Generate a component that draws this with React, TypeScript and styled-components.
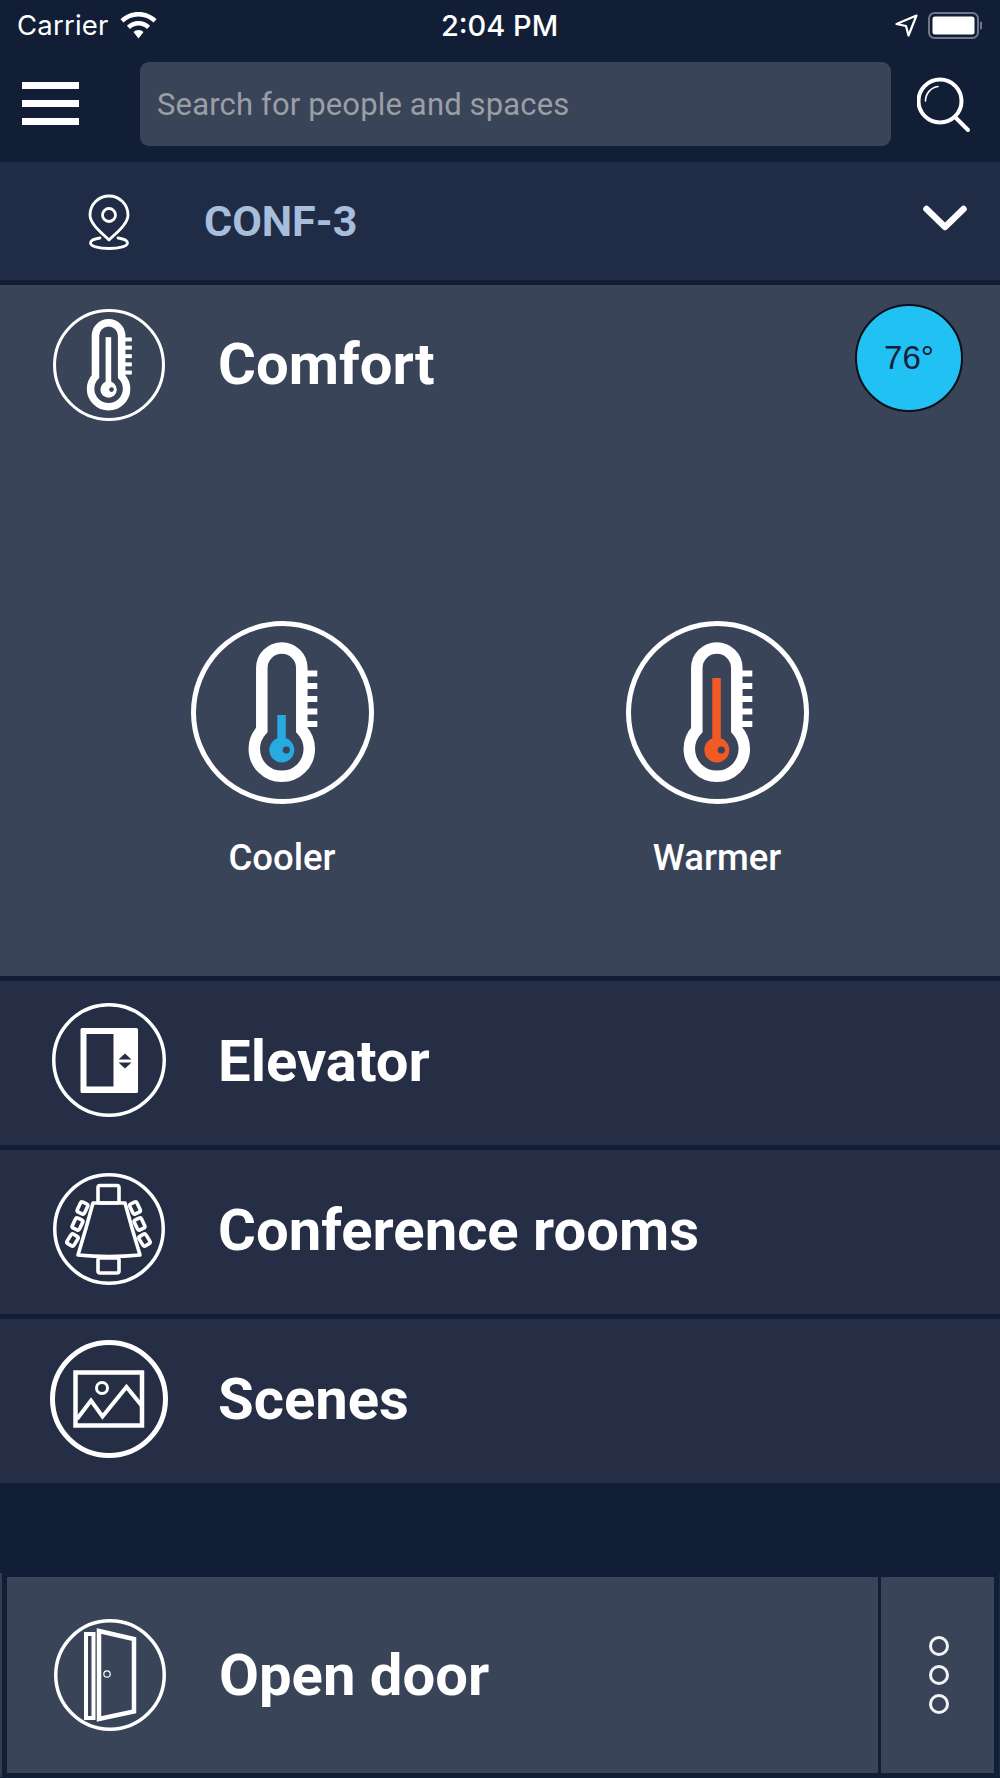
import React from "react";
import styled, { createGlobalStyle } from "styled-components";

const Global = createGlobalStyle`
  html, body { margin: 0; padding: 0; background: #121e35; }
  * { box-sizing: border-box; }
`;

const Page = styled.div`
  width: 1000px;
  height: 1778px;
  background: #121e35;
  color: #fff;
  font-family: Roboto, "Liberation Sans", sans-serif;
  overflow: hidden;
  display: flex;
  flex-direction: column;
`;

const StatusBar = styled.div`
  height: 52px;
  display: grid;
  grid-template-columns: 1fr auto 1fr;
  align-items: center;
  padding: 0 18px 2px 17px;
  font-family: Inter, Roboto, sans-serif;
`;
const StatusLeft = styled.div`
  display: flex;
  align-items: center;
  gap: 11px;
  font-size: 27.5px;
  letter-spacing: 0.2px;
`;
const StatusTime = styled.div`
  font-size: 29px;
  font-weight: 500;
`;
const StatusRight = styled.div`
  display: flex;
  justify-content: flex-end;
  align-items: center;
  gap: 10px;
`;

const TopBar = styled.div`
  height: 110px;
  display: flex;
  align-items: flex-start;
  padding: 10px 0 0 22px;
`;
const Burger = styled.div`
  width: 57px;
  height: 43px;
  margin-top: 20px;
  display: flex;
  flex-direction: column;
  justify-content: space-between;
`;
const BurgerBar = styled.span`
  height: 7px;
  background: #fff;
`;
const SearchField = styled.div`
  width: 751px;
  height: 84px;
  margin-left: 61px;
  padding-left: 17px;
  display: flex;
  align-items: center;
  background: #3a4459;
  border-radius: 9px;
  color: #9b9ea5;
  font-size: 31px;
  letter-spacing: 0.15px;
`;
const SearchBtn = styled.div`
  margin: 15px 0 0 26px;
  line-height: 0;
`;

const LocationRow = styled.div`
  height: 118px;
  background: #202c46;
  display: flex;
  align-items: center;
  padding: 0 33px 0 88px;
  line-height: 0;
`;
const LocationName = styled.div`
  margin: 0 0 0 74px;
  flex: 1;
  color: #a6bedb;
  font-size: 43px;
  font-weight: 700;
  line-height: 1;
`;
const ChevronWrap = styled.div`
  margin-bottom: 4px;
`;

const Panel = styled.section`
  margin-top: 5px;
  height: 691px;
  background: #3a4459;
`;
const PanelHeader = styled.div`
  display: grid;
  grid-template-columns: 218px 1fr auto;
  align-items: center;
  height: 160px;
  padding-right: 37px;
`;
const IconSlot = styled.div<{ $lift?: number }>`
  display: flex;
  justify-content: center;
  align-items: center;
  line-height: 0;
  margin-bottom: ${(p) => p.$lift ?? 0}px;
`;
const Title = styled.div`
  font-size: 58px;
  font-weight: 700;
  line-height: 1;
  margin-bottom: 3px;
`;
const RowTitle = styled(Title)`
  margin-bottom: 5px;
`;
const DoorTitle = styled(Title)`
  margin: 0 0 0 6px;
`;
const Badge = styled.div`
  width: 108px;
  height: 108px;
  margin-top: -14px;
  border-radius: 50%;
  background: #21c2f3;
  border: 2.5px solid #0b0f18;
  color: #14213a;
  font-family: "Liberation Sans", Arial, sans-serif;
  font-size: 33px;
  display: flex;
  align-items: center;
  justify-content: center;
`;
const Actions = styled.div`
  display: grid;
  grid-template-columns: 434px 434px;
  column-gap: 1px;
  padding: 176px 0 0 65px;
`;
const Action = styled.div`
  display: flex;
  flex-direction: column;
  align-items: center;
`;
const ActionLabel = styled.div`
  margin-top: 34px;
  font-size: 36.5px;
  font-weight: 500;
  line-height: 40px;
`;

const Rows = styled.div`
  margin-top: 5px;
  display: flex;
  flex-direction: column;
  gap: 5px;
`;
const Row = styled.div`
  height: 164px;
  background: #252e44;
  display: grid;
  grid-template-columns: 218px 1fr;
  align-items: center;
`;

const Footer = styled.div`
  margin-top: 90px;
  height: 204px;
  padding: 4px 4px 4px 5px;
  border-left: 2px solid #323d53;
  border-right: 1px solid #1d2940;
  display: grid;
  grid-template-columns: 871px 113px;
  gap: 3px;
`;
const DoorCell = styled.div`
  background: #3a4459;
  display: grid;
  grid-template-columns: 206px 1fr;
  align-items: center;
`;
const MoreCell = styled.div`
  background: #3a4459;
  display: flex;
  flex-direction: column;
  align-items: center;
  justify-content: center;
  gap: 9px;
  padding-left: 2px;
`;
const Dot = styled.span`
  width: 20px;
  height: 20px;
  border-radius: 50%;
  border: 3px solid #f2f3f5;
`;

const Ring = ({ size, sw = 3.5, children }: { size: number; sw?: number; children: React.ReactNode }) => (
  <svg width={size} height={size} viewBox={`0 0 ${size} ${size}`}>
    <circle cx={size / 2} cy={size / 2} r={size / 2 - sw / 2} fill="none" stroke="#fff" strokeWidth={sw} />
    {children}
  </svg>
);

const Thermo = ({
  size,
  fill,
  top,
  inner = 1,
  bg = "#3a4459",
}: {
  size: number;
  fill: string;
  top: number;
  inner?: number;
  bg?: string;
}) => {
  return (
    <svg width={size} height={size} viewBox="0 0 183 183">
      <circle cx="91.5" cy="91.5" r="89" fill="none" stroke="#fff" strokeWidth="5" />
      <g transform={`translate(90.8 91.5) scale(${inner}) translate(-91.5 -91.5)`}>
        <path
          d="M71.5 109 V47 a20 20 0 0 1 40 0 V109 A27.5 27.5 0 1 1 71.5 109 Z"
          fill="none"
          stroke="#fff"
          strokeWidth="11.5"
        />
        {[49.5, 62, 75, 87.5, 100].map((y) => (
          <rect key={y} x="116" y={y} width="11" height="6" fill="#fff" />
        ))}
        <rect x="87" y={top} width="8.5" height={125 - top} fill={fill} />
        <circle cx="91.5" cy="129" r="12.5" fill={fill} />
        <circle cx="96" cy="129" r="3.6" fill={bg} />
      </g>
    </svg>
  );
};

const ElevatorIcon = () => (
  <Ring size={114}>
    <path
      fillRule="evenodd"
      fill="#fff"
      d="M30 25 H84.5 a1.5 1.5 0 0 1 1.5 1.5 V88.5 a1.5 1.5 0 0 1 -1.5 1.5 H30 a1.5 1.5 0 0 1 -1.5 -1.5 V26.5 A1.5 1.5 0 0 1 30 25 Z M34.5 31 V83.5 H61.5 V31 Z"
    />
    <path d="M73 50.5 L79.5 56.5 H66.5 Z M66.5 59.5 H79.5 L73 65.5 Z" fill="#252e44" />
  </Ring>
);

const ConfIcon = () => (
  <Ring size={112}>
    <g fill="none" stroke="#fff" strokeWidth="3.6" strokeLinejoin="round">
      <path d="M40 30 H72 Q79 56 87 82 Q56 85 25 82 Q33 56 40 30 Z" />
      <rect x="45" y="12.5" width="21" height="17.5" rx="2" />
      <rect x="45" y="85" width="21" height="15" rx="2" />
      <rect x="25.5" y="29.5" width="8" height="11" rx="2" transform="rotate(25 29.5 35)" />
      <rect x="20.5" y="45.5" width="8" height="11" rx="2" transform="rotate(25 24.5 51)" />
      <rect x="15.5" y="61.5" width="8" height="11" rx="2" transform="rotate(32 19.5 67)" />
      <rect x="78" y="29.5" width="8" height="11" rx="2" transform="rotate(-25 82 35)" />
      <rect x="82.5" y="45.5" width="8" height="11" rx="2" transform="rotate(-25 86.5 51)" />
      <rect x="87.5" y="61.5" width="8" height="11" rx="2" transform="rotate(-32 91.5 67)" />
    </g>
  </Ring>
);

const ScenesIcon = () => (
  <Ring size={118} sw={5}>
    <g fill="none" stroke="#fff">
      <rect x="25.5" y="32.5" width="66.5" height="53" strokeWidth="4.5" />
      <circle cx="52" cy="48" r="5.5" strokeWidth="3" />
      <path d="M27 79 L41 60.5 L52.5 76.5 L76.5 47 L92 66" strokeWidth="4" />
    </g>
  </Ring>
);

const DoorIcon = () => (
  <Ring size={112}>
    <g fill="none" stroke="#fff">
      <rect x="32" y="15" width="7.5" height="84" strokeWidth="4" />
      <path d="M45 12 L80 20 V92.5 L45 100 Z" strokeWidth="4.5" />
      <circle cx="53" cy="55" r="3.2" strokeWidth="1.2" />
    </g>
  </Ring>
);

const Wifi = () => (
  <svg width="37" height="27" viewBox="0 0 37 27">
    <path d="M18.5 0 C11.5 0 5.2 2.7 0.5 7.2 L3.5 10.4 C7.4 6.7 12.7 4.5 18.5 4.5 C24.3 4.5 29.6 6.7 33.5 10.4 L36.5 7.2 C31.8 2.7 25.5 0 18.5 0 Z" fill="#fff" />
    <path d="M18.5 9 C14 9 9.9 10.8 6.9 13.7 L10 16.9 C12.2 14.8 15.2 13.5 18.5 13.5 C21.8 13.5 24.8 14.8 27 16.9 L30.1 13.7 C27.1 10.8 23 9 18.5 9 Z" fill="#fff" />
    <path d="M18.5 18 C16.5 18 14.8 18.8 13.5 20 L18.5 26.5 L23.5 20 C22.2 18.8 20.5 18 18.5 18 Z" fill="#fff" />
  </svg>
);

const LocArrow = () => (
  <svg width="23" height="23" viewBox="0 0 23 23">
    <path d="M21.5 1.5 L1.5 10 L11 12 L13.5 21.5 Z" fill="none" stroke="#fff" strokeWidth="2.2" strokeLinejoin="round" />
  </svg>
);

const Battery = () => (
  <svg width="54" height="27" viewBox="0 0 54 27">
    <rect x="1" y="1" width="49" height="25" rx="5.5" fill="none" stroke="#70778a" strokeWidth="2" />
    <rect x="4.5" y="4.5" width="42" height="18" rx="2.5" fill="#fff" />
    <path d="M52 9.5 a3.5 4 0 0 1 0 8 Z" fill="#70778a" />
  </svg>
);

const SearchIcon = () => (
  <svg width="54" height="56" viewBox="0 0 54 56">
    <circle cx="23" cy="24" r="21.5" fill="none" stroke="#fff" strokeWidth="4" />
    <path d="M8.5 24 A14.5 14.5 0 0 1 21 9.5" fill="none" stroke="#fff" strokeWidth="1.6" strokeLinecap="round" />
    <path d="M39 41 L51 53" stroke="#fff" strokeWidth="4" strokeLinecap="round" />
  </svg>
);

const Pin = () => (
  <svg width="42" height="57" viewBox="0 0 42 57">
    <path d="M21 47 C14 40 2 31 2 22 A19 19 0 0 1 40 22 C40 31 28 40 21 47 Z" fill="none" stroke="#fff" strokeWidth="2.8" strokeLinejoin="round" />
    <circle cx="21" cy="22" r="6.5" fill="none" stroke="#fff" strokeWidth="2.8" />
    <path d="M12 45 C5 46 2.5 48 2.5 50 C2.5 53 10 55.5 21 55.5 C32 55.5 39.5 53 39.5 50 C39.5 48 37 46 30 45" fill="none" stroke="#fff" strokeWidth="2.8" strokeLinecap="round" />
  </svg>
);

const Chevron = () => (
  <svg width="44" height="28" viewBox="0 0 44 28">
    <path d="M3.5 4 L22 22 L40.5 4" fill="none" stroke="#fff" strokeWidth="6.5" strokeLinecap="round" strokeLinejoin="round" />
  </svg>
);

export default function App() {
  return (
    <Page>
      <Global />
      <StatusBar>
        <StatusLeft>
          Carrier
          <Wifi />
        </StatusLeft>
        <StatusTime>2:04 PM</StatusTime>
        <StatusRight>
          <LocArrow />
          <Battery />
        </StatusRight>
      </StatusBar>
      <TopBar>
        <Burger>
          <BurgerBar />
          <BurgerBar />
          <BurgerBar />
        </Burger>
        <SearchField>Search for people and spaces</SearchField>
        <SearchBtn>
          <SearchIcon />
        </SearchBtn>
      </TopBar>
      <LocationRow>
        <Pin />
        <LocationName>CONF-3</LocationName>
        <ChevronWrap>
          <Chevron />
        </ChevronWrap>
      </LocationRow>
      <Panel>
        <PanelHeader>
          <IconSlot>
            <Thermo size={112} fill="#fff" top={49} inner={1.07} />
          </IconSlot>
          <Title>Comfort</Title>
          <Badge>76°</Badge>
        </PanelHeader>
        <Actions>
          <Action>
            <Thermo size={183} fill="#27a9e1" top={94} />
            <ActionLabel>Cooler</ActionLabel>
          </Action>
          <Action>
            <Thermo size={183} fill="#f15a24" top={57} />
            <ActionLabel>Warmer</ActionLabel>
          </Action>
        </Actions>
      </Panel>
      <Rows>
        <Row>
          <IconSlot $lift={6}>
            <ElevatorIcon />
          </IconSlot>
          <RowTitle>Elevator</RowTitle>
        </Row>
        <Row>
          <IconSlot $lift={6}>
            <ConfIcon />
          </IconSlot>
          <RowTitle>Conference rooms</RowTitle>
        </Row>
        <Row>
          <IconSlot $lift={4}>
            <ScenesIcon />
          </IconSlot>
          <RowTitle>Scenes</RowTitle>
        </Row>
      </Rows>
      <Footer>
        <DoorCell>
          <IconSlot>
            <DoorIcon />
          </IconSlot>
          <DoorTitle>Open door</DoorTitle>
        </DoorCell>
        <MoreCell>
          <Dot />
          <Dot />
          <Dot />
        </MoreCell>
      </Footer>
    </Page>
  );
}
